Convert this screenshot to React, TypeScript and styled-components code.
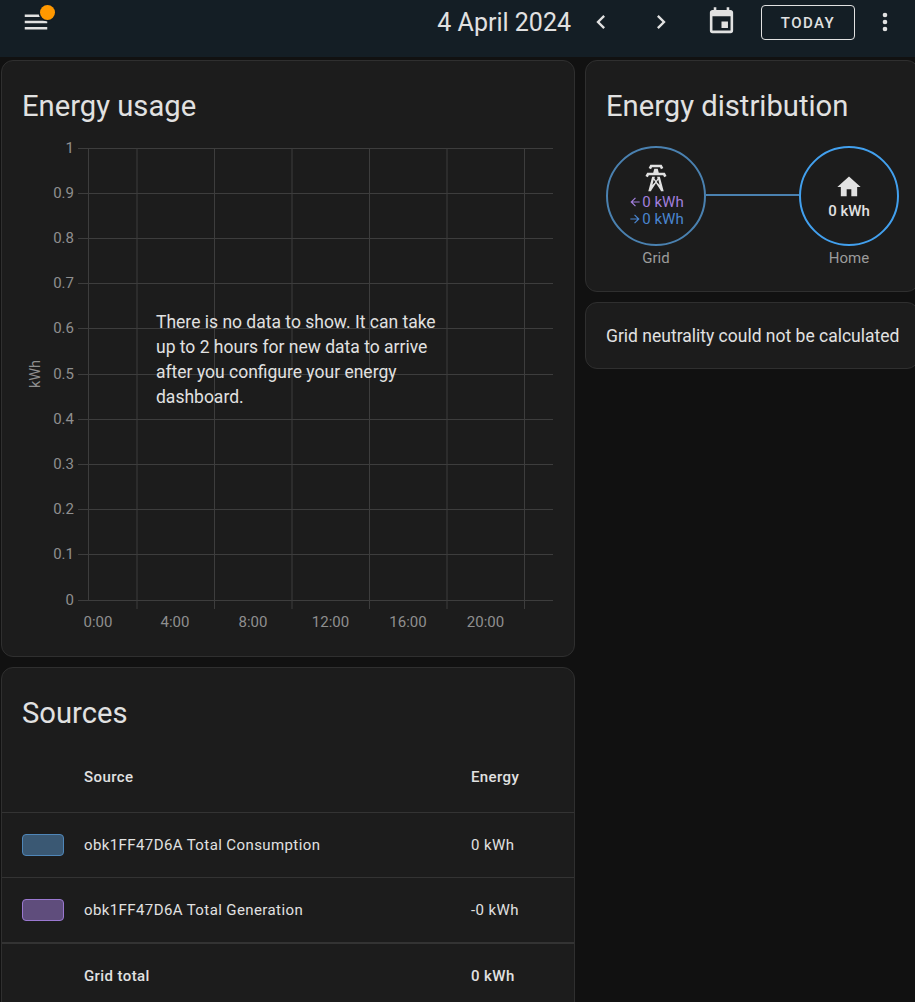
import React from "react";
import styled, { createGlobalStyle } from "styled-components";

const Global = createGlobalStyle`
  html, body { margin: 0; padding: 0; background: #111111; }
  body { font-family: Roboto, "Noto Sans", sans-serif; color: #e1e1e1; }
  #root { height: 1002px; overflow: hidden; }
`;
const Page = styled.div`width: 915px; height: 1002px; overflow: hidden; background: #111111;`;
const TopBar = styled.header`
  height: 57px; background: #141e25; display: flex; align-items: center; padding: 0 6px 0 12px;
  box-sizing: border-box; margin-bottom: 3px;
`;
const IconButton = styled.button`
  position: relative; width: 48px; height: 48px; padding: 0; border: 0; background: none; color: #e1e1e1;
  display: flex; align-items: center; justify-content: center; flex: none;
`;
const MenuButton = styled(IconButton)`margin-top: -13px;`;
const Dot = styled.span`
  position: absolute; top: 7px; left: 28px; width: 15px; height: 15px; border-radius: 50%;
  background: #ff9800; box-shadow: 0 0 0 1.5px #141e25;
`;
const Spacer = styled.div`flex: 1;`;
const DateText = styled.div`font-size: 25px; color: #e1e1e1; margin-top: -13px;`;
const NavButton = styled(IconButton)`width: 60px; margin-top: -13px;`;
const CalButton = styled(IconButton)`margin: -14px 0 0 6px;`;
const TodayButton = styled.button`
  width: 94px; height: 35px; margin: -12px 6px 0 16px; border: 1px solid #e1e1e1; border-radius: 4px; background: none;
  color: #e1e1e1; font: 500 15px Roboto, sans-serif; letter-spacing: 1.45px; padding: 0; flex: none;
`;
const MoreButton = styled(IconButton)`margin-top: -13px;`;

const Main = styled.main`display: grid; grid-template-columns: 574px 334px; column-gap: 10px; padding-left: 1px;`;
const Column = styled.div`display: flex; flex-direction: column; gap: 10px;`;
const Card = styled.section`
  position: relative; background: #1c1c1c; border: 1px solid #2f2f2f; border-radius: 12px; box-sizing: border-box;
`;
const UsageCard = styled(Card)`height: 597px;`;
const SourcesCard = styled(Card)`height: 360px;`;
const Title = styled.h2`
  margin: 0; padding: 29px 20px 0; font-size: 29.2px; line-height: 32px; font-weight: 400; color: #e1e1e1; letter-spacing: 0;
`;
const ChartSvg = styled.svg`display: block; position: absolute; left: -1px; top: -1px;`;
const NoData = styled.div`
  position: absolute; left: 154px; top: 249px; width: 285px; font-size: 17.5px; line-height: 25px; color: #e1e1e1;
`;
const DistCard = styled(Card)`height: 232px;`;
const Flow = styled.div`display: flex; padding: 24px 0 0 20px; width: 293px; box-sizing: content-box;`;
const Node = styled.div`width: 100px; flex: none; display: flex; flex-direction: column; align-items: center;`;
const Circle = styled.div<{ $c: string }>`
  width: 100px; height: 100px; box-sizing: border-box; border: 2px solid ${(p) => p.$c}; border-radius: 50%;
  display: flex; flex-direction: column; align-items: center; justify-content: center; font-size: 15px; line-height: 17px;
`;
const NodeLabel = styled.div`font-size: 15px; line-height: 17px; color: #9b9b9b; margin-top: 4px;`;
const Link = styled.div`flex: 1; height: 2px; margin-top: 48px; background: #4a81b0;`;
const TowerWrap = styled.div`height: 32px; margin-top: -3px;`;
const Reading = styled.div<{ $c: string }>`color: ${(p) => p.$c}; display: flex; align-items: center; gap: 0;`;
const HomeValue = styled.div`font-weight: 500; color: #e1e1e1; margin-top: 2px;`;
const Neutrality = styled(Card)`height: 67px; padding: 23px 20px 0; font-size: 17.5px; line-height: 20px; white-space: nowrap; color: #e1e1e1;`;

const Table = styled.table`
  width: 100%; margin-top: 14px; border-collapse: collapse; font-size: 15px; letter-spacing: 0.4px; color: #e1e1e1;
`;
const Th = styled.th`height: 69px; text-align: left; font-weight: 500; padding: 0; box-sizing: border-box; border-bottom: 1px solid #333333;`;
const Td = styled.td`height: 64px; padding: 0; border-bottom: 1px solid #333333;`;
const TotalCell = styled.td`height: 65px; padding: 0; box-sizing: border-box; font-weight: 500; border-top: 2px solid #333333;`;
const SwatchCol = styled.col`width: 82px;`;
const NameCol = styled.col`width: 387px;`;
const Swatch = styled.div<{ $b: string; $bg: string }>`
  width: 42px; height: 22px; margin-left: 20px; box-sizing: border-box; border: 1px solid ${(p) => p.$b};
  background: ${(p) => p.$bg}; border-radius: 4px;
`;

const Mdi = ({ d, size = 24, color = "currentColor" }: { d: string; size?: number; color?: string }) => (
  <svg width={size} height={size} viewBox="0 0 24 24" fill={color}><path d={d} /></svg>
);

const P = {
  menu: "M3,6H21V8H3V6M3,11H21V13H3V11M3,16H21V18H3V16Z",
  left: "M15.41,16.58L10.83,12L15.41,7.41L14,6L8,12L14,18L15.41,16.58Z",
  right: "M8.59,16.58L13.17,12L8.59,7.41L10,6L16,12L10,18L8.59,16.58Z",
  cal: "M19,19H5V8H19M16,1V3H8V1H6V3H5C3.89,3 3,3.89 3,5V19A2,2 0 0,0 5,21H19A2,2 0 0,0 21,19V5C21,3.89 20.1,3 19,3H18V1M17,12H12V17H17V12Z",
  dots: "M12,16A2,2 0 0,1 14,18A2,2 0 0,1 12,20A2,2 0 0,1 10,18A2,2 0 0,1 12,16M12,10A2,2 0 0,1 14,12A2,2 0 0,1 12,14A2,2 0 0,1 10,12A2,2 0 0,1 12,10M12,4A2,2 0 0,1 14,6A2,2 0 0,1 12,8A2,2 0 0,1 10,6A2,2 0 0,1 12,4Z",
  home: "M10,20V14H14V20H19V12H22L12,3L2,12H5V20H10Z",
  tower: "M8.28,5.45L6.5,4.55L7.76,2H16.23L17.5,4.55L15.72,5.44L15,4H9L8.28,5.45M18.62,8H14.09L13.3,5H10.7L9.91,8H5.38L4.1,10.55L5.89,11.44L6.62,10H17.38L18.1,11.45L19.89,10.56L18.62,8M17.77,22H15.7L15.46,21.1L12,15.9L8.53,21.1L8.3,22H6.23L9.12,11H11.19L10.83,12.35L12,14.1L13.16,12.35L12.81,11H14.88L17.77,22M11.47,15L10.31,13.26L9.27,17.24L11.47,15M14.73,17.24L13.69,13.26L12.53,15L14.73,17.24Z",
  aLeft: "M20,11V13H8L13.5,18.5L12.08,19.92L4.16,12L12.08,4.08L13.5,5.5L8,11H20Z",
  aRight: "M4,11V13H16L10.5,18.5L11.92,19.92L19.84,12L11.92,4.08L10.5,5.5L16,11H4Z",
};

const yLabels = ["1", "0.9", "0.8", "0.7", "0.6", "0.5", "0.4", "0.3", "0.2", "0.1", "0"];
const vLines = [87, 135.5, 213, 290.5, 368, 445.5, 523];
const xLabels = [["0:00", 97], ["4:00", 174], ["8:00", 252], ["12:00", 329.5], ["16:00", 407], ["20:00", 484.5]] as const;

const Chart = () => (
  <ChartSvg width="572" height="595" viewBox="0 0 572 595" fontFamily="Roboto, sans-serif" fontSize="15" fill="#8f8f8f">
    {yLabels.map((l, i) => {
      const y = 87.5 + i * 45.2;
      return (
        <g key={l}>
          <line x1="77" x2="552" y1={Math.round(y) + 0.5} y2={Math.round(y) + 0.5} stroke="#3d3d3d" />
          <text x="73" y={y + 5} textAnchor="end">{l}</text>
        </g>
      );
    })}
    {vLines.map((x, i) => (
      <line key={x} x1={x + 0.5} x2={x + 0.5} y1="88" y2={i === 0 ? 540 : 549} stroke="#3d3d3d" />
    ))}
    {xLabels.map(([l, x]) => (
      <text key={l} x={x} y="567" textAnchor="middle">{l}</text>
    ))}
    <text transform="translate(39 314) rotate(-90)" textAnchor="middle" fontSize="14.5">kWh</text>
  </ChartSvg>
);

export default function App() {
  return (
    <Page>
      <Global />
      <TopBar>
        <MenuButton aria-label="menu">
          <Mdi d={P.menu} size={30} />
          <Dot />
        </MenuButton>
        <Spacer />
        <DateText>4 April 2024</DateText>
        <NavButton aria-label="previous"><Mdi d={P.left} size={28} /></NavButton>
        <NavButton aria-label="next"><Mdi d={P.right} size={28} /></NavButton>
        <CalButton aria-label="calendar"><Mdi d={P.cal} size={31} /></CalButton>
        <TodayButton>TODAY</TodayButton>
        <MoreButton aria-label="more"><Mdi d={P.dots} size={28} /></MoreButton>
      </TopBar>
      <Main>
        <Column>
          <UsageCard>
            <Title>Energy usage</Title>
            <Chart />
            <NoData>There is no data to show. It can take up to 2 hours for new data to arrive after you configure your energy dashboard.</NoData>
          </UsageCard>
          <SourcesCard>
            <Title>Sources</Title>
            <Table>
              <colgroup><SwatchCol /><NameCol /><col /></colgroup>
              <thead>
                <tr><Th /><Th>Source</Th><Th>Energy</Th></tr>
              </thead>
              <tbody>
                <tr>
                  <Td><Swatch $b="#4f86b8" $bg="#3a5873" /></Td>
                  <Td>obk1FF47D6A Total Consumption</Td>
                  <Td>0 kWh</Td>
                </tr>
                <tr>
                  <Td><Swatch $b="#9a78d0" $bg="#5f4d7c" /></Td>
                  <Td>obk1FF47D6A Total Generation</Td>
                  <Td>-0 kWh</Td>
                </tr>
                <tr><TotalCell /><TotalCell>Grid total</TotalCell><TotalCell>0 kWh</TotalCell></tr>
              </tbody>
            </Table>
          </SourcesCard>
        </Column>
        <Column>
          <DistCard>
            <Title>Energy distribution</Title>
            <Flow>
              <Node>
                <Circle $c="#4a81b0">
                  <TowerWrap><Mdi d={P.tower} size={32} color="#e1e1e1" /></TowerWrap>
                  <Reading $c="#a17fdc"><Mdi d={P.aLeft} size={14} />0 kWh</Reading>
                  <Reading $c="#4a86d0"><Mdi d={P.aRight} size={14} />0 kWh</Reading>
                </Circle>
                <NodeLabel>Grid</NodeLabel>
              </Node>
              <Link />
              <Node>
                <Circle $c="#42a0ee">
                  <Mdi d={P.home} size={28} color="#e1e1e1" />
                  <HomeValue>0 kWh</HomeValue>
                </Circle>
                <NodeLabel>Home</NodeLabel>
              </Node>
            </Flow>
          </DistCard>
          <Neutrality>Grid neutrality could not be calculated</Neutrality>
        </Column>
      </Main>
    </Page>
  );
}
